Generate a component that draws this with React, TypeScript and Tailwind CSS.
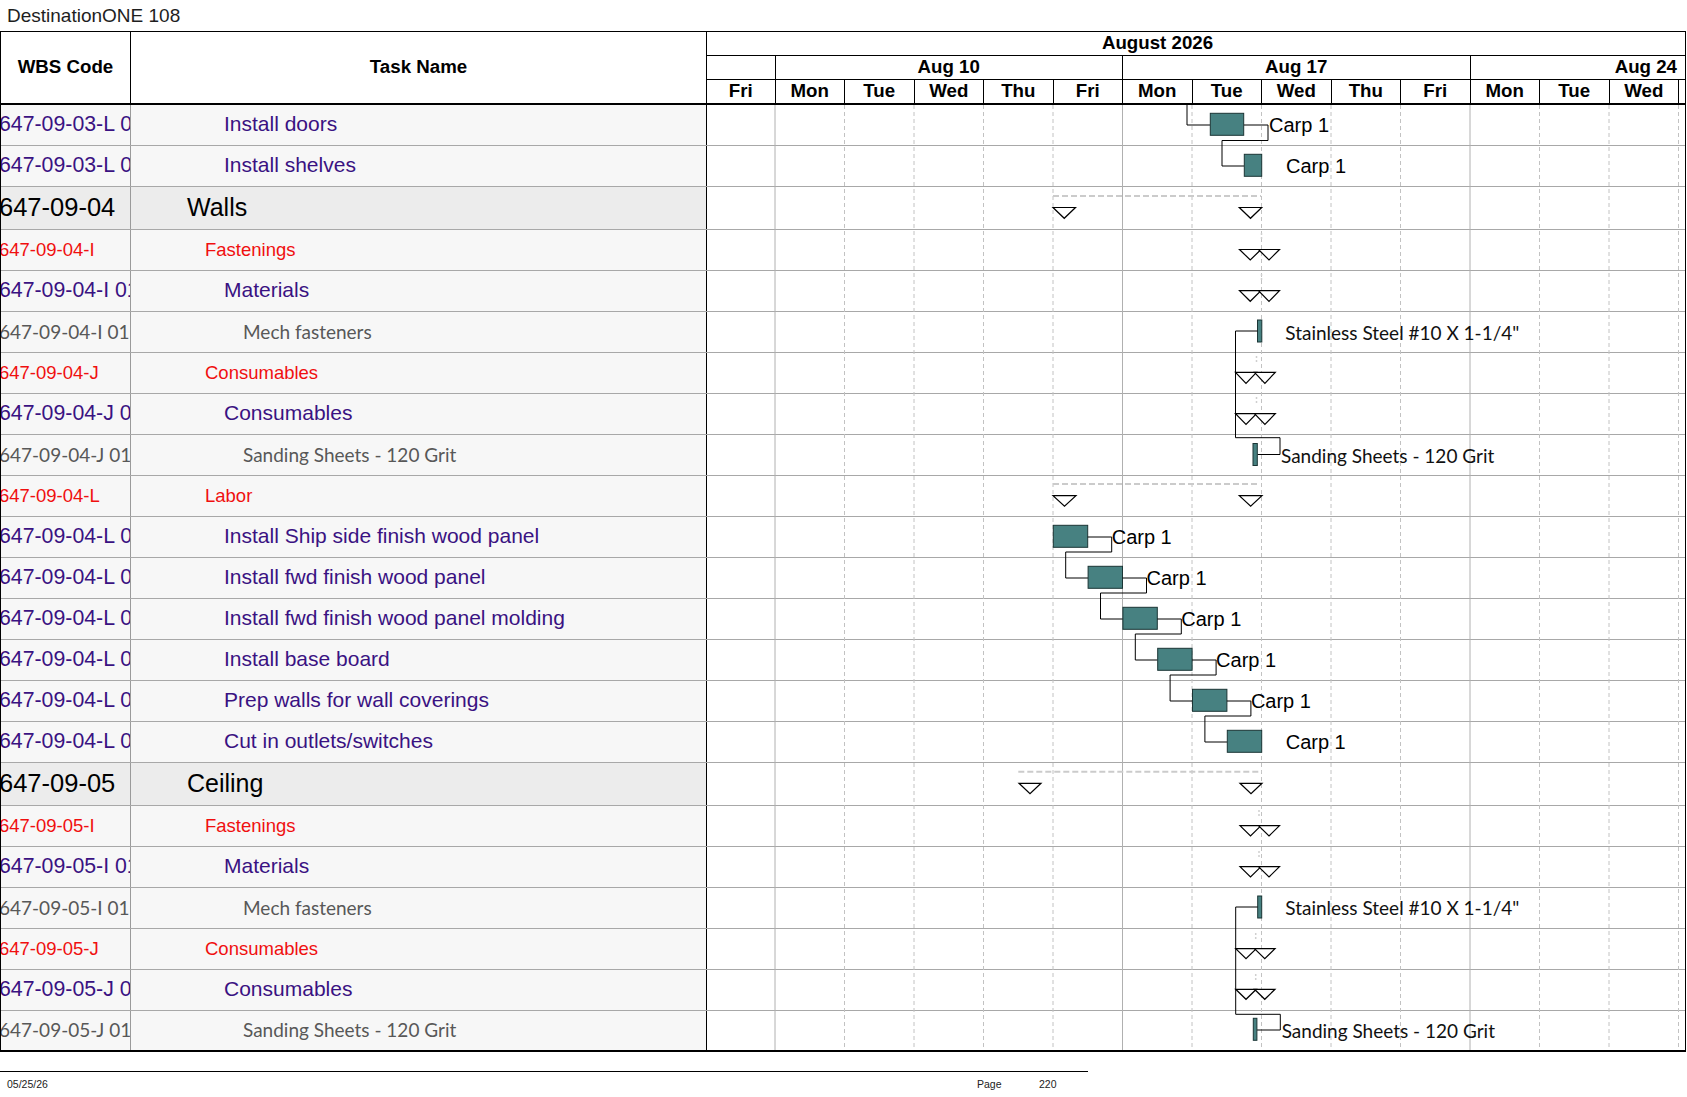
import React from 'react';

type Kind = 'task' | 'group' | 'summary' | 'item';

interface Row {
  wbs: string;
  name: string;
  kind: Kind;
}

const rows: Row[] = [
  { wbs: '647-09-03-L 01', name: 'Install doors', kind: 'task' },
  { wbs: '647-09-03-L 02', name: 'Install shelves', kind: 'task' },
  { wbs: '647-09-04', name: 'Walls', kind: 'summary' },
  { wbs: '647-09-04-I', name: 'Fastenings', kind: 'group' },
  { wbs: '647-09-04-I 01', name: 'Materials', kind: 'task' },
  { wbs: '647-09-04-I 01-01', name: 'Mech fasteners', kind: 'item' },
  { wbs: '647-09-04-J', name: 'Consumables', kind: 'group' },
  { wbs: '647-09-04-J 01', name: 'Consumables', kind: 'task' },
  { wbs: '647-09-04-J 01 01', name: 'Sanding Sheets - 120 Grit', kind: 'item' },
  { wbs: '647-09-04-L', name: 'Labor', kind: 'group' },
  { wbs: '647-09-04-L 01', name: 'Install Ship side finish wood panel', kind: 'task' },
  { wbs: '647-09-04-L 02', name: 'Install fwd finish wood panel', kind: 'task' },
  { wbs: '647-09-04-L 03', name: 'Install fwd finish wood panel molding', kind: 'task' },
  { wbs: '647-09-04-L 04', name: 'Install base board', kind: 'task' },
  { wbs: '647-09-04-L 05', name: 'Prep walls for wall coverings', kind: 'task' },
  { wbs: '647-09-04-L 06', name: 'Cut in outlets/switches', kind: 'task' },
  { wbs: '647-09-05', name: 'Ceiling', kind: 'summary' },
  { wbs: '647-09-05-I', name: 'Fastenings', kind: 'group' },
  { wbs: '647-09-05-I 01', name: 'Materials', kind: 'task' },
  { wbs: '647-09-05-I 01-01', name: 'Mech fasteners', kind: 'item' },
  { wbs: '647-09-05-J', name: 'Consumables', kind: 'group' },
  { wbs: '647-09-05-J 01', name: 'Consumables', kind: 'task' },
  { wbs: '647-09-05-J 01 01', name: 'Sanding Sheets - 120 Grit', kind: 'item' },
];

const styles: Record<Kind, { wbs: string; name: string; bg: string }> = {
  task: {
    bg: 'bg-[#f7f7f7]',
    wbs: "pb-[1px] text-[21.3px] text-[#3a1282] font-['Liberation_Sans',Arial,sans-serif]",
    name: "pb-[4px] pl-[93px] text-[21px] text-[#3a1282] font-['Liberation_Sans',Arial,sans-serif]",
  },
  group: {
    bg: 'bg-[#f7f7f7]',
    wbs: "text-[18.5px] text-[#f00f0f] font-['Liberation_Sans',Arial,sans-serif]",
    name: "pl-[74px] text-[18.5px] text-[#f00f0f] font-['Liberation_Sans',Arial,sans-serif]",
  },
  summary: {
    bg: 'bg-[#ececec]',
    wbs: "text-[25.5px] text-black font-['Liberation_Sans',Arial,sans-serif]",
    name: "pb-[2px] pl-[56px] text-[25px] text-black font-['Liberation_Sans',Arial,sans-serif]",
  },
  item: {
    bg: 'bg-[#f7f7f7]',
    wbs: "pb-[2px] text-[19px] text-[#585858] font-['Lato','Open_Sans',sans-serif]",
    name: "pb-[2px] pl-[112px] text-[19px] text-[#585858] font-['Lato','Open_Sans',sans-serif]",
  },
};

function rowHeightClass(kind: Kind, last: boolean): string {
  if (last) return 'h-[39px]';
  if (kind === 'summary') return 'h-[43px] border-b border-[#a8a8a8]';
  return 'h-[41px] border-b border-[#a8a8a8]';
}

const days = ['Fri', 'Mon', 'Tue', 'Wed', 'Thu', 'Fri', 'Mon', 'Tue', 'Wed', 'Thu', 'Fri', 'Mon', 'Tue', 'Wed'];

function Tri({ x1, x2, y1, y2 }: { x1: number; x2: number; y1: number; y2: number }) {
  return (
    <polygon
      points={`${x1},${y1} ${x2},${y1} ${(x1 + x2) / 2},${y2}`}
      fill="white"
      stroke="black"
      strokeWidth={1.2}
    />
  );
}

function Bar({ x, y, w, h = 22 }: { x: number; y: number; w: number; h?: number }) {
  return <rect x={x} y={y} width={w} height={h} fill="#478181" stroke="#1b3535" strokeWidth={1} />;
}

function Wire({ pts }: { pts: number[][] }) {
  return <polyline points={pts.map((p) => p.join(',')).join(' ')} fill="none" stroke="black" strokeWidth={1} />;
}

function Label({ x, y, children, calibri }: { x: number; y: number; children: React.ReactNode; calibri?: boolean }) {
  return (
    <text
      x={x}
      y={y}
      dominantBaseline="central"
      fontFamily={calibri ? "Lato, 'Open Sans', sans-serif" : "'Liberation Sans', Arial, sans-serif"}
      fontSize={calibri ? 19 : 20}
      fill={calibri ? '#111' : '#000'}
    >
      {children}
    </text>
  );
}

function SummaryDash({ x1, x2, y }: { x1: number; x2: number; y: number }) {
  return <line x1={x1} x2={x2} y1={y} y2={y} stroke="#cbcbcb" strokeWidth={2} strokeDasharray="6 3" />;
}

function Tick({ x, y }: { x: number; y: number }) {
  return <line x1={x} x2={x} y1={y} y2={y + 6} stroke="#cfcfcf" strokeWidth={1.5} strokeDasharray="2 2" />;
}

function GanttDrawing() {
  const D = 69.5;
  const grid = Array.from({ length: 14 }, (_, i) => ({
    x: 706 + D * (i + 1) - 0.5,
    solid: i === 0 || i === 5 || i === 10,
  }));

  const labor = Array.from({ length: 6 }, (_, k) => {
    const top = 517 + 41 * k;
    const L = 1053.3 + 34.8 * k;
    return { top, L, R: L + 34.4, cy: top + 20 };
  });

  return (
    <svg
      className="absolute inset-0 pointer-events-none"
      width={978}
      height={945}
      viewBox="707 105 978 945"
    >
      {grid.map((g, i) => (
        <line
          key={i}
          x1={g.x}
          x2={g.x}
          y1={105}
          y2={1050}
          stroke={g.solid ? '#b0b0b0' : '#c2c2c2'}
          strokeWidth={1}
          strokeDasharray={g.solid ? undefined : '4 3'}
        />
      ))}

      {/* Install doors / shelves */}
      <Wire pts={[[1187, 105], [1187, 125], [1210, 125]]} />
      <Bar x={1210.3} y={113.3} w={33.4} />
      <Wire pts={[[1244, 125], [1268, 125], [1268, 140.5], [1222, 140.5], [1222, 166], [1244, 166]]} />
      <Label x={1269} y={125}>Carp 1</Label>
      <Bar x={1244.3} y={154.3} w={17.4} />
      <Label x={1286} y={166}>Carp 1</Label>

      {/* Walls */}
      <SummaryDash x1={1053} x2={1261} y={196} />
      <Tri x1={1053} x2={1075.5} y1={207.5} y2={218.3} />
      <Tri x1={1239.3} x2={1261.7} y1={207.5} y2={218.3} />

      <Tick x={1261.5} y={233} />
      <Tri x1={1239.5} x2={1261} y1={249.5} y2={260} />
      <Tri x1={1258.5} x2={1279.5} y1={249.5} y2={260} />

      <Tick x={1261.5} y={274} />
      <Tri x1={1239.5} x2={1261} y1={290.7} y2={301.3} />
      <Tri x1={1258.5} x2={1279.5} y1={290.7} y2={301.3} />

      <Bar x={1257.5} y={320} w={4.3} />
      <Wire pts={[[1257.5, 331], [1235.5, 331], [1235.5, 437.7], [1280, 437.7], [1280, 454.5], [1257.3, 454.5]]} />
      <Label x={1285.3} y={332} calibri>Stainless Steel #10 X 1-1/4"</Label>

      <Tick x={1256.5} y={356} />
      <Tri x1={1235.5} x2={1256.5} y1={372.3} y2={383.3} />
      <Tri x1={1254.5} x2={1275.3} y1={372.3} y2={383.3} />

      <Tick x={1256.5} y={397} />
      <Tri x1={1235.5} x2={1256.5} y1={413.7} y2={424.3} />
      <Tri x1={1254.5} x2={1275.3} y1={413.7} y2={424.3} />

      <Bar x={1253} y={443.5} w={4.3} />
      <Label x={1281} y={455.5} calibri>Sanding Sheets - 120 Grit</Label>

      {/* Labor */}
      <SummaryDash x1={1053} x2={1260} y={484} />
      <Tri x1={1053} x2={1076} y1={495.7} y2={506.3} />
      <Tri x1={1239.3} x2={1262} y1={495.7} y2={506.3} />

      {labor.map((b, k) => (
        <g key={k}>
          <Bar x={b.L} y={b.top + 8.3} w={34.4} />
          <Label x={b.R + 24} y={b.cy}>Carp 1</Label>
          {k < 5 && (
            <Wire
              pts={[
                [b.R, b.cy],
                [b.R + 24, b.cy],
                [b.R + 24, b.top + 35],
                [b.L + 12.4, b.top + 35],
                [b.L + 12.4, labor[k + 1].cy],
                [labor[k + 1].L, labor[k + 1].cy],
              ]}
            />
          )}
        </g>
      ))}

      {/* Ceiling */}
      <SummaryDash x1={1018.3} x2={1262} y={771.7} />
      <Tri x1={1019} x2={1041} y1={783.3} y2={793.7} />
      <Tri x1={1240} x2={1262} y1={783.3} y2={793.7} />

      <Tick x={1259} y={810} />
      <Tri x1={1240} x2={1261} y1={825.7} y2={836} />
      <Tri x1={1258.5} x2={1279.5} y1={825.7} y2={836} />

      <Tick x={1259} y={851} />
      <Tri x1={1240} x2={1261} y1={866.7} y2={877} />
      <Tri x1={1258.5} x2={1279.5} y1={866.7} y2={877} />

      <Bar x={1257.7} y={896} w={4} />
      <Wire pts={[[1257.7, 907], [1235.7, 907], [1235.7, 1014.3], [1280.3, 1014.3], [1280.3, 1030], [1256.7, 1030]]} />
      <Label x={1285.3} y={907.5} calibri>Stainless Steel #10 X 1-1/4"</Label>

      <Tick x={1255.7} y={933} />
      <Tri x1={1235.7} x2={1256.3} y1={948.7} y2={958.7} />
      <Tri x1={1254.5} x2={1275} y1={948.7} y2={958.7} />

      <Tick x={1255.7} y={974} />
      <Tri x1={1235.7} x2={1256.3} y1={989.3} y2={999.3} />
      <Tri x1={1254.5} x2={1275} y1={989.3} y2={999.3} />

      <Bar x={1253.3} y={1018.3} w={3.6} />
      <Label x={1281.7} y={1030} calibri>Sanding Sheets - 120 Grit</Label>
    </svg>
  );
}

export default function App() {
  const hdr = "font-['Liberation_Sans',Arial,sans-serif] font-bold text-[18.7px] leading-none text-black";
  return (
    <div className="w-[1687px] h-[1097px] bg-white overflow-hidden">
      {/* Title */}
      <div className="h-[31px] flex items-center pl-[7px] text-[19px] text-[#1e1e1e] font-['Liberation_Sans',Arial,sans-serif] leading-none">
        DestinationONE 108
      </div>

      {/* Table */}
      <div className="w-[1686px] border-t border-l border-r border-b-2 border-black">
        {/* Header */}
        <div className="flex h-[73px] border-b-2 border-black">
          <div className={`w-[130px] shrink-0 border-r border-black flex items-center justify-center ${hdr}`}>
            WBS Code
          </div>
          <div className={`w-[576px] shrink-0 border-r border-black flex items-center justify-center ${hdr}`}>
            Task Name
          </div>
          <div className="flex-1 flex flex-col">
            <div className={`h-[24px] shrink-0 border-b border-black flex items-center justify-center pr-[77px] ${hdr}`}>
              August 2026
            </div>
            <div className={`h-[24px] shrink-0 border-b border-black flex ${hdr}`}>
              <div className="w-[68.5px] shrink-0 border-r border-black" />
              <div className="w-[347.5px] shrink-0 border-r border-black flex items-center justify-center">Aug 10</div>
              <div className="w-[347.5px] shrink-0 border-r border-black flex items-center justify-center">Aug 17</div>
              <div className="flex-1 flex items-center justify-end pr-[8px]">Aug 24</div>
            </div>
            <div className={`flex-1 flex ${hdr}`}>
              {days.map((d, i) => (
                <div
                  key={i}
                  className={
                    i === 0
                      ? 'w-[68.5px] shrink-0 border-r border-black flex items-center justify-center'
                      : 'w-[69.5px] shrink-0 border-r border-black flex items-center justify-center'
                  }
                >
                  {d}
                </div>
              ))}
              <div className="flex-1" />
            </div>
          </div>
        </div>

        {/* Body */}
        <div className="flex">
          <div className="w-[706px] shrink-0 flex flex-col">
            {rows.map((r, i) => {
              const s = styles[r.kind];
              const last = i === rows.length - 1;
              return (
                <div key={i} className={`flex ${rowHeightClass(r.kind, last)} ${s.bg}`}>
                  <div className="w-[130px] shrink-0 border-r border-[#9a9a9a] overflow-hidden whitespace-nowrap flex items-center">
                    <span className={`-ml-[2px] leading-none ${s.wbs}`}>{r.wbs}</span>
                  </div>
                  <div className="w-[576px] shrink-0 border-r border-black overflow-hidden whitespace-nowrap flex items-center">
                    <span className={`leading-none ${s.name}`}>{r.name}</span>
                  </div>
                </div>
              );
            })}
          </div>
          <div className="relative flex-1 flex flex-col bg-white">
            {rows.map((r, i) => (
              <div key={i} className={rowHeightClass(r.kind, i === rows.length - 1)} />
            ))}
            <GanttDrawing />
          </div>
        </div>
      </div>

      {/* Footer */}
      <div className="mt-[19px] w-[1088px] border-t border-black h-[26px] flex items-center text-[10.5px] text-[#222] font-['Liberation_Sans',Arial,sans-serif] leading-none">
        <span className="w-[977px] shrink-0 pl-[7px]">05/25/26</span>
        <span className="w-[62px] shrink-0">Page</span>
        <span>220</span>
      </div>
    </div>
  );
}
